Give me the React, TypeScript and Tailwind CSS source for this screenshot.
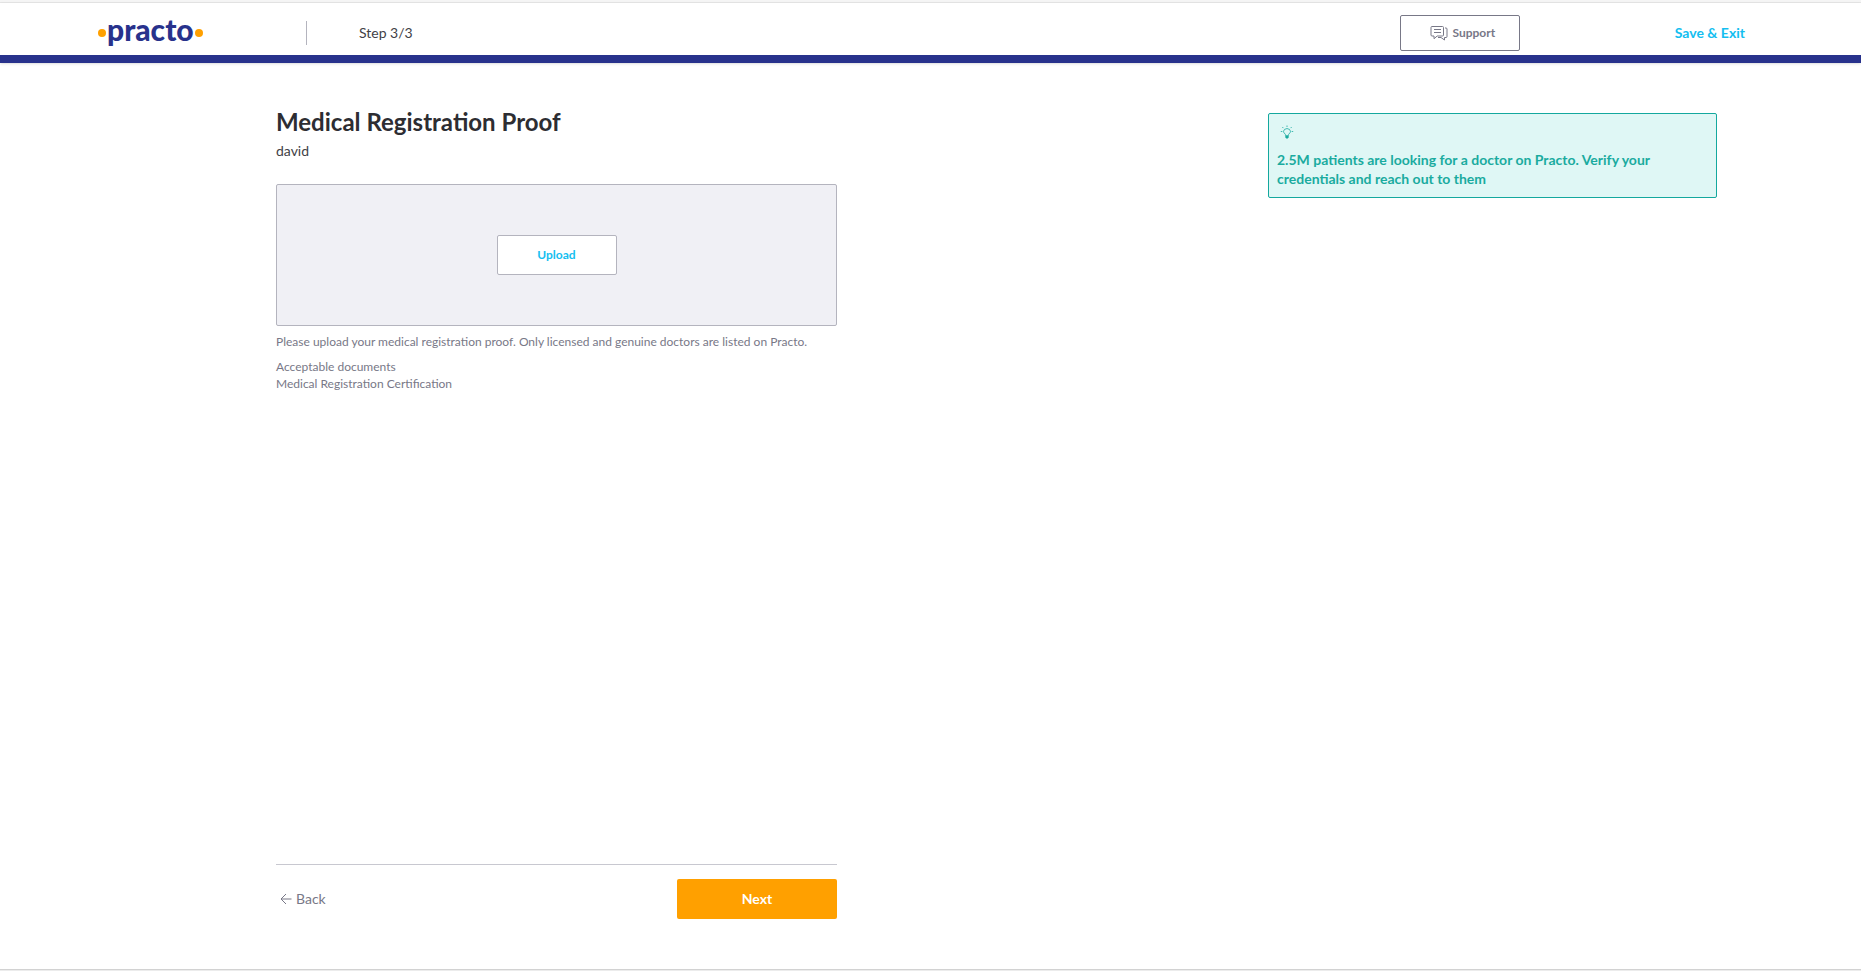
import React from "react";

function Logo() {
  return (
    <a href="#home" aria-label="practo" className="flex items-center text-[#28328c]">
      <span className="size-2 rounded-full bg-[#ffa000]" />
      <span className="mx-px -mt-2 text-[30px] leading-9 font-black">practo</span>
      <span className="size-2 rounded-full bg-[#ffa000]" />
    </a>
  );
}

function ChatIcon() {
  return (
    <svg width="18" height="16" viewBox="0 0 18 16" fill="none" stroke="currentColor" aria-hidden="true">
      <path d="M2 1.5H12.5Q13.5 1.5 13.5 2.5V10Q13.5 11 12.5 11H7.2L4 13.7V11H2Q1 11 1 10V2.5Q1 1.5 2 1.5Z" />
      <path d="M4 4.5H11M4 7.5H11" />
      <path d="M15 3H16Q17 3 17 4V11.5Q17 12.5 16 12.5H14.5V15L11 12.5H8" />
    </svg>
  );
}

function BulbIcon() {
  return (
    <svg width="14" height="14" viewBox="0 0 14 14" fill="none" stroke="currentColor" aria-hidden="true">
      <path strokeWidth="0.8" d="M5.4 10.5V9.3Q3.5 7.8 3.5 6.3Q3.7 4 7 3.5Q10.3 4 10.5 6.3Q10.5 7.8 8.6 9.3V10.5" />
      <path strokeWidth="0.5" d="M5.6 10.5H8.4V12.5L7.8 13.2H6.2L5.6 12.5Z" fill="currentColor" />
      <path strokeWidth="0.8" d="M7 0.5V2M0.8 6.5H2.3M11.7 6.5H13.2M2.3 2L3.4 3.1M11.7 2L10.6 3.1" />
    </svg>
  );
}

function BackArrow() {
  return (
    <svg width="12" height="12" viewBox="0 0 12 12" fill="none" stroke="currentColor" aria-hidden="true">
      <path d="M6 1L1 6L6 11M1 6H11.5" />
    </svg>
  );
}

export default function App() {
  return (
    <div className="flex min-h-screen flex-col bg-white font-['Lato',sans-serif] text-sm text-[#414146]">
      <div className="h-[3px] border-b border-[#e6e6e6] bg-[#f5f5f5]" />
      <header className="flex h-15 items-center border-b-8 border-[#28328c] pt-2 pr-[116px] pl-[98px] shadow">
        <div className="w-52">
          <Logo />
        </div>
        <div className="h-6 w-px bg-[#b4b4be]" />
        <span className="ml-[52px] leading-5">Step 3/3</span>
        <button
          type="button"
          className="ml-auto flex h-9 w-[120px] items-center justify-center gap-1 rounded-xs border border-[#787887] pl-1.5 text-xs font-bold text-[#787887]"
        >
          <ChatIcon />
          Support
        </button>
        <a href="#exit" className="ml-[155px] leading-5 font-bold text-[#14bef0]">
          Save &amp; Exit
        </a>
      </header>

      <main className="flex grow items-stretch justify-between pt-[42px] pr-36 pb-[50px] pl-[276px]">
        <section className="flex w-[561px] flex-col pt-[3px]">
          <h1 className="text-2xl leading-7 font-bold text-[#2d2d32]">Medical Registration Proof</h1>
          <p className="mt-[5px] leading-5">david</p>
          <div className="mt-[23px] flex h-[142px] items-center justify-center rounded-xs border border-[#b4b4be] bg-[#f0f0f5]">
            <button
              type="button"
              className="h-10 w-[120px] rounded-xs border border-[#b4b4be] bg-white text-xs font-bold text-[#14bef0]"
            >
              Upload
            </button>
          </div>
          <div className="mt-[7px] text-xs leading-[17px] text-[#787887]">
            <p>Please upload your medical registration proof. Only licensed and genuine doctors are listed on Practo.</p>
            <p className="mt-2">Acceptable documents</p>
            <p>Medical Registration Certification</p>
          </div>
          <div className="mt-auto flex items-center justify-between border-t border-[#c8c8d0] pt-3.5">
            <a href="#back" className="ml-1 flex items-center gap-1 leading-5 text-[#787887]">
              <BackArrow />
              Back
            </a>
            <button type="button" className="h-10 w-40 rounded-xs bg-[#ffa000] text-sm font-bold text-white">
              Next
            </button>
          </div>
        </section>

        <aside className="mt-2 w-[449px] self-start rounded-xs border border-[#14a89e] bg-[#dff7f5] px-2 pt-[11px] pb-2 font-bold text-[#1aab9f]">
          <div className="ml-[3px]">
            <BulbIcon />
          </div>
          <p className="mt-[11px] mb-px leading-[19px]">
            2.5M patients are looking for a doctor on Practo. Verify your credentials and reach out to them
          </p>
        </aside>
      </main>
      <div className="h-0.5 border-t border-[#d2d2d2] bg-[#ececec]" />
    </div>
  );
}
